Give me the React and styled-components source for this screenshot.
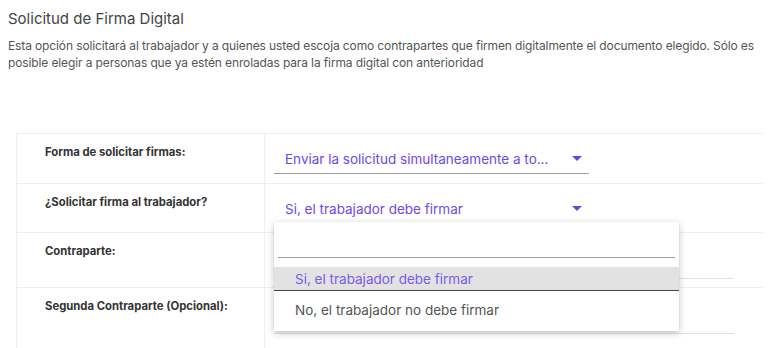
import React from "react";
import styled, { createGlobalStyle } from "styled-components";

const GlobalStyle = createGlobalStyle`
  body {
    margin: 0;
    background: #fff;
    font-family: Inter, "Noto Sans", sans-serif;
  }
`;

const Page = styled.div`
  padding: 8px 8px 0 8px;
  height: 348px;
  box-sizing: border-box;
  overflow: hidden;
`;

const Title = styled.h2`
  margin: 0;
  font-size: 15px;
  font-weight: 400;
  color: #444;
  line-height: 21px;
`;

const Description = styled.p`
  margin: 8px 0 0 0;
  font-size: 12px;
  line-height: 17px;
  letter-spacing: -0.12px;
  color: #555;
`;

const Table = styled.div`
  margin: 62px 0 0 8px;
  width: 746px;
  border-top: 1px solid #eee;
  border-left: 1px solid #eee;
`;

const Row = styled.div`
  display: grid;
  grid-template-columns: 248px 1fr;
  height: ${(p) => p.h}px;
  border-bottom: 1px solid #eee;
`;

const Label = styled.div`
  padding: 11px 0 0 28px;
  font-size: 11.3px;
  line-height: 14px;
  font-weight: 700;
  color: #333;
  border-right: 1px solid #eee;
`;

const Cell = styled.div`
  position: relative;
  padding: 10px 0 0 9px;
`;

const Select = styled.div`
  width: 315px;
  height: 30px;
  box-sizing: border-box;
  display: flex;
  align-items: center;
  justify-content: space-between;
  padding: 0 7px 0 11px;
  border-bottom: 1px solid ${(p) => (p.open ? "transparent" : "#9e9e9e")};
  font-size: 13.5px;
  color: #7048e8;
`;

const Arrow = styled.span`
  width: 0;
  height: 0;
  border-left: 5px solid transparent;
  border-right: 5px solid transparent;
  border-top: 5px solid #6a45e6;
  margin-top: -1px;
`;

const TextField = styled.div`
  width: 460px;
  height: 35px;
  border-bottom: 1px solid #e0e0e0;
`;

const Menu = styled.div`
  position: absolute;
  left: 9px;
  top: 38px;
  width: 405px;
  height: 109px;
  background: #fff;
  box-shadow: 0 2px 8px rgba(0, 0, 0, 0.2), 0 1px 2px rgba(0, 0, 0, 0.1);
  z-index: 2;
`;

const Search = styled.div`
  margin: 0 4px;
  height: 35px;
  border-bottom: 1px solid #9e9e9e;
`;

const Option = styled.div`
  margin-top: ${(p) => (p.active ? "9px" : "0")};
  height: ${(p) => (p.active ? "23px" : "38px")};
  display: flex;
  align-items: center;
  padding-left: 21px;
  font-size: 13.5px;
  color: ${(p) => (p.active ? "#7b5ce9" : "#555")};
  background: ${(p) => (p.active ? "#e2e2e2" : "transparent")};
  border-bottom: ${(p) => (p.active ? "1px solid #444" : "none")};
`;

export default function App() {
  return (
    <>
      <GlobalStyle />
      <Page>
        <Title>Solicitud de Firma Digital</Title>
        <Description>
          Esta opción solicitará al trabajador y a quienes usted escoja como contrapartes que firmen
          digitalmente el documento elegido. Sólo es posible elegir a personas que ya estén enroladas
          para la firma digital con anterioridad
        </Description>
        <Table>
          <Row h={49}>
            <Label>Forma de solicitar firmas:</Label>
            <Cell>
              <Select>
                <span>Enviar la solicitud simultaneamente a to...</span>
                <Arrow />
              </Select>
            </Cell>
          </Row>
          <Row h={48}>
            <Label>¿Solicitar firma al trabajador?</Label>
            <Cell>
              <Select open>
                <span>Si, el trabajador debe firmar</span>
                <Arrow />
              </Select>
              <Menu>
                <Search />
                <Option active>Si, el trabajador debe firmar</Option>
                <Option>No, el trabajador no debe firmar</Option>
              </Menu>
            </Cell>
          </Row>
          <Row h={54}>
            <Label>Contraparte:</Label>
            <Cell>
              <TextField />
            </Cell>
          </Row>
          <Row h={80}>
            <Label>Segunda Contraparte (Opcional):</Label>
            <Cell>
              <TextField />
            </Cell>
          </Row>
        </Table>
      </Page>
    </>
  );
}
